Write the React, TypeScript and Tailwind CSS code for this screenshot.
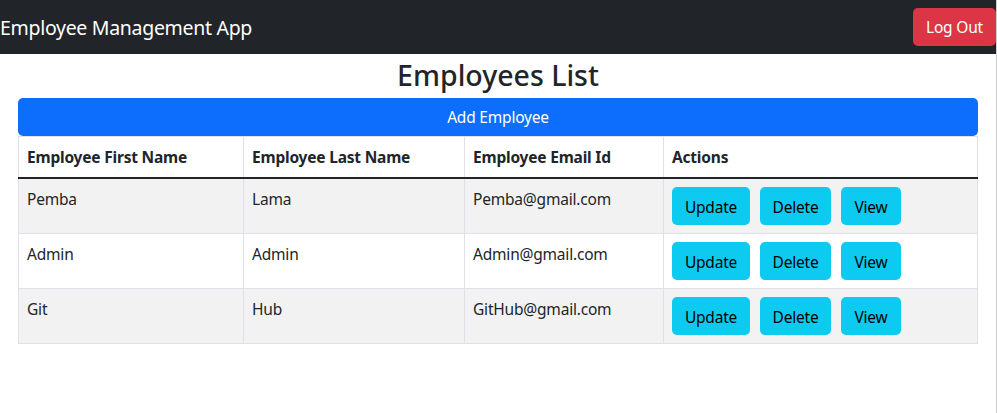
const employees = [
  { id: 1, firstName: "Pemba", lastName: "Lama", email: "Pemba@gmail.com" },
  { id: 2, firstName: "Admin", lastName: "Admin", email: "Admin@gmail.com" },
  { id: 3, firstName: "Git", lastName: "Hub", email: "GitHub@gmail.com" },
]

export default function App() {
  return (
    <div className="flex min-h-[413px] bg-white font-['Noto_Sans',sans-serif] text-[#212529]">
      <div className="w-[996px]">
        <nav className="flex h-[54px] items-center justify-between bg-[#212529]">
          <span className="pt-[2px] text-[19.5px] leading-[30px] tracking-[-0.3px] text-white">Employee Management App</span>
          <button className="h-[38px] w-[83px] rounded-[5px] bg-[#dc3545] pt-[2px] text-[15.5px] tracking-[-0.2px] text-white">
            Log Out
          </button>
        </nav>

        <h2 className="mt-[3px] text-center text-[28.5px] font-medium leading-[36px]">Employees List</h2>

        <div className="mx-auto mt-[5px] w-[960px]">
          <button className="h-[38px] w-full rounded-[5px] bg-[#0d6efd] pt-[2px] text-[15.5px] tracking-[-0.2px] text-white">
            Add Employee
          </button>

          <table className="w-full table-fixed border-collapse text-[15.5px] leading-[24px] tracking-[-0.2px]">
            <thead>
              <tr>
                <th className="w-[225px] border border-[#dee2e6] px-2 py-2 text-left font-bold">Employee First Name</th>
                <th className="w-[221px] border border-[#dee2e6] px-2 py-2 text-left font-bold">Employee Last Name</th>
                <th className="w-[199px] border border-[#dee2e6] px-2 py-2 text-left font-bold">Employee Email Id</th>
                <th className="border border-[#dee2e6] px-2 py-2 text-left font-bold">Actions</th>
              </tr>
            </thead>
            <tbody className="border-t-2 border-t-[#212529]">
              {employees.map((emp, i) => (
                <tr key={emp.id} className={i % 2 === 0 ? "bg-[#f2f2f2]" : "bg-white"}>
                  <td className="border border-[#dee2e6] px-2 py-2 align-top">{emp.firstName}</td>
                  <td className="border border-[#dee2e6] px-2 py-2 align-top">{emp.lastName}</td>
                  <td className="border border-[#dee2e6] px-2 py-2 align-top">{emp.email}</td>
                  <td className="border border-[#dee2e6] px-2 py-2 align-top">
                    <div className="flex gap-[10px]">
                      <button className="h-[38px] w-[78px] rounded-[5px] bg-[#0dcaf0] pt-[2px] text-black">Update</button>
                      <button className="h-[38px] w-[71px] rounded-[5px] bg-[#0dcaf0] pt-[2px] text-black">Delete</button>
                      <button className="h-[38px] w-[60px] rounded-[5px] bg-[#0dcaf0] pt-[2px] text-black">View</button>
                    </div>
                  </td>
                </tr>
              ))}
            </tbody>
          </table>
        </div>
      </div>
      <div className="w-px bg-[#cfcfcf]" />
    </div>
  )
}
